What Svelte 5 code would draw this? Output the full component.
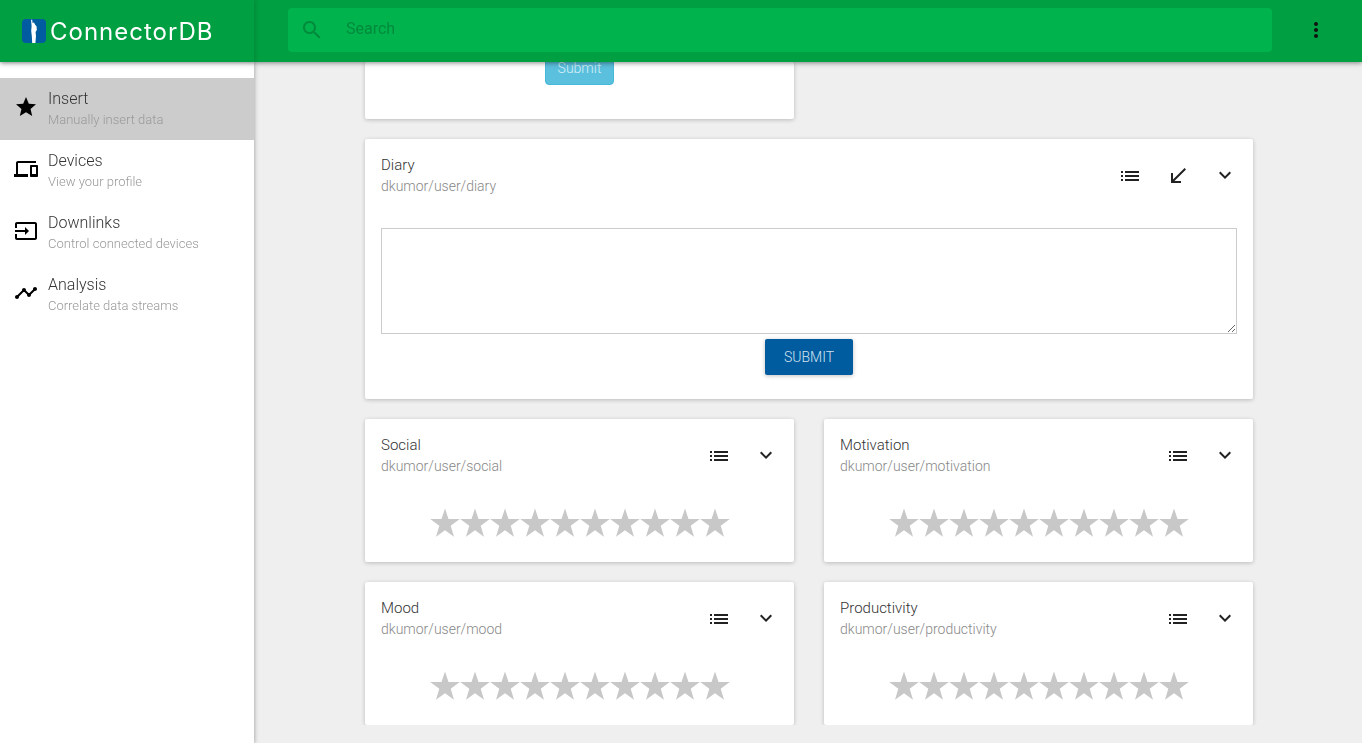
<script>
    const nav = [
        { title: "Insert", sub: "Manually insert data", icon: "star", active: true },
        { title: "Devices", sub: "View your profile", icon: "devices" },
        { title: "Downlinks", sub: "Control connected devices", icon: "input" },
        { title: "Analysis", sub: "Correlate data streams", icon: "timeline" },
    ];

    const ratings = [
        { title: "Social", path: "dkumor/user/social" },
        { title: "Motivation", path: "dkumor/user/motivation" },
        { title: "Mood", path: "dkumor/user/mood" },
        { title: "Productivity", path: "dkumor/user/productivity" },
    ];

    const icons = {
        star: "M12 17.27L18.18 21l-1.64-7.03L22 9.24l-7.19-.61L12 2 9.19 8.63 2 9.24l5.46 4.73L5.82 21z",
        devices: "M4 6h18V4H4c-1.1 0-2 .9-2 2v11H0v3h14v-3H4V6zm19 2h-6c-.55 0-1 .45-1 1v10c0 .55.45 1 1 1h6c.55 0 1-.45 1-1V9c0-.55-.45-1-1-1zm-1 9h-4v-7h4v7z",
        input: "M21 3.01H3c-1.1 0-2 .9-2 2V9h2V4.99h18v14.03H3V15H1v4.01c0 1.1.9 1.98 2 1.98h18c1.1 0 2-.88 2-1.98v-14c0-1.11-.9-2-2-2zM11 16l4-4-4-4v3H1v2h10v3z",
        timeline: "M23 8c0 1.1-.9 2-2 2-.18 0-.35-.02-.51-.07l-3.56 3.55c.05.16.07.34.07.52 0 1.1-.9 2-2 2s-2-.9-2-2c0-.18.02-.36.07-.52l-2.55-2.55c-.16.05-.34.07-.52.07s-.36-.02-.52-.07l-4.55 4.56c.05.16.07.33.07.51 0 1.1-.9 2-2 2s-2-.9-2-2 .9-2 2-2c.18 0 .35.02.51.07l4.56-4.55C8.02 9.36 8 9.18 8 9c0-1.1.9-2 2-2s2 .9 2 2c0 .18-.02.36-.07.52l2.55 2.55c.16-.05.34-.07.52-.07s.36.02.52.07l3.55-3.56C19.02 8.35 19 8.18 19 8c0-1.1.9-2 2-2s2 .9 2 2z",
        list: "M3 13h2v-2H3v2zm0 4h2v-2H3v2zm0-8h2V7H3v2zm4 4h14v-2H7v2zm0 4h14v-2H7v2zM7 7v2h14V7H7z",
        received: "M20 5.41L18.59 4 7 15.59V9H5v10h10v-2H8.41z",
        down: "M7.41 8.59L12 13.17l4.59-4.58L18 10l-6 6-6-6 1.41-1.41z",
        search: "M15.5 14h-.79l-.28-.27C15.41 12.59 16 11.11 16 9.5 16 5.91 13.09 3 9.5 3S3 5.91 3 9.5 5.91 16 9.5 16c1.61 0 3.09-.59 4.23-1.57l.27.28v.79l5 4.99L20.49 19l-4.99-5zm-6 0C7.01 14 5 11.99 5 9.5S7.01 5 9.5 5 14 7.01 14 9.5 11.99 14 9.5 14z",
        more: "M12 8c1.1 0 2-.9 2-2s-.9-2-2-2-2 .9-2 2 .9 2 2 2zm0 2c-1.1 0-2 .9-2 2s.9 2 2 2 2-.9 2-2-.9-2-2-2zm0 6c-1.1 0-2 .9-2 2s.9 2 2 2 2-.9 2-2-.9-2-2-2z",
    };
</script>

{#snippet icon(name)}
    <svg class="icon" viewBox="0 0 24 24" aria-hidden="true"><path d={icons[name]} /></svg>
{/snippet}

{#snippet cardHead(title, path, actions)}
    <div class="card-head">
        <div class="card-title">
            <div class="name">{title}</div>
            <div class="path">{path}</div>
        </div>
        <div class="actions">
            {#each actions as a}
                <button class="action">{@render icon(a)}</button>
            {/each}
        </div>
    </div>
{/snippet}

<header class="topbar">
    <div class="brand">
        <svg class="logo" viewBox="0 0 24 24" aria-hidden="true">
            <rect width="24" height="24" rx="4" fill="#005ca0" />
            <path
                d="M9 .8h1.2l.4 3.2 1.4-.5 1 2 1.6 2 .2 3.5-1.2 2 .4 4-.6 7h-3.2l-.4-7-.6-5 .4-5z"
                fill="#fff"
            />
        </svg>
        <span class="brand-name">ConnectorDB</span>
    </div>
    <div class="searchbar">
        <div class="search">
            <span class="search-icon">{@render icon("search")}</span>
            <span class="search-label">Search</span>
        </div>
        <button class="more">{@render icon("more")}</button>
    </div>
</header>

<aside class="sidebar">
    {#each nav as item}
        <div class="nav-item" class:active={item.active}>
            <span class="nav-icon">{@render icon(item.icon)}</span>
            <div>
                <div class="nav-title">{item.title}</div>
                <div class="nav-sub">{item.sub}</div>
            </div>
        </div>
    {/each}
</aside>

<main class="content">
    <section class="card clipped">
        <button class="submit-old">Submit</button>
    </section>

    <section class="card diary">
        {@render cardHead("Diary", "dkumor/user/diary", ["list", "received", "down"])}
        <div class="diary-body">
            <textarea></textarea>
            <button class="submit">Submit</button>
        </div>
    </section>

    <div class="rating-grid">
        {#each ratings as r}
            <section class="card rating">
                {@render cardHead(r.title, r.path, ["list", "down"])}
                <div class="stars">
                    {#each Array(10) as _}
                        <svg class="star" viewBox="0 0 30 30" aria-hidden="true">
                            <polygon points="15,0.5 18.5,11 29.8,11 20.7,17.8 24,28.8 15,22.2 6,28.8 9.3,17.8 0.2,11 11.5,11" />
                        </svg>
                    {/each}
                </div>
            </section>
        {/each}
    </div>
</main>

<style>
    :global(body) {
        background: #efefef;
        font-family: Roboto, "Liberation Sans", sans-serif;
        font-weight: 300;
        color: #333;
        overflow: hidden;
    }

    button {
        font-family: inherit;
        border: none;
        background: none;
        padding: 0;
    }

    .icon {
        display: block;
        width: 24px;
        height: 24px;
        fill: currentColor;
    }

    .topbar {
        position: fixed;
        top: 0;
        left: 0;
        right: 0;
        z-index: 3;
        height: 62px;
        display: flex;
        background: #009f41;
        box-shadow: 0 1px 6px rgba(0, 0, 0, 0.25), 0 1px 4px rgba(0, 0, 0, 0.25);
    }

    .brand {
        width: 254px;
        flex: none;
        display: flex;
        align-items: center;
        gap: 4px;
        padding-left: 22px;
        box-sizing: border-box;
        box-shadow: 2px 0 4px rgba(0, 0, 0, 0.12);
    }

    .logo {
        width: 24px;
        height: 24px;
    }

    .brand-name {
        font-family: Inter, sans-serif;
        font-size: 24px;
        font-weight: 400;
        letter-spacing: 1px;
        color: #fff;
    }

    .searchbar {
        flex: 1;
        display: flex;
        align-items: center;
        padding-left: 34px;
        padding-bottom: 2px;
    }

    .search {
        width: 984px;
        height: 44px;
        display: flex;
        align-items: center;
        background: #00b34d;
        border-radius: 4px;
        color: #008a3c;
    }

    .search-icon {
        margin-left: 12px;
    }

    .search-label {
        margin-left: 22px;
        padding-bottom: 4px;
        font-size: 16px;
        font-weight: 400;
    }

    .more {
        margin-left: 32px;
        color: #111;
    }

    .sidebar {
        position: fixed;
        top: 62px;
        left: 0;
        bottom: 0;
        z-index: 2;
        width: 254px;
        padding-top: 16px;
        box-sizing: border-box;
        background: #fff;
        box-shadow: 0 1px 6px rgba(0, 0, 0, 0.2), 0 1px 4px rgba(0, 0, 0, 0.2);
    }

    .nav-item {
        height: 62px;
        display: flex;
        align-items: center;
        gap: 10px;
        padding-left: 14px;
        padding-top: 2px;
        box-sizing: border-box;
    }

    .nav-item .nav-icon {
        margin-top: -6px;
    }

    .nav-item.active {
        background: #cccccc;
    }

    .nav-icon {
        color: #000;
    }

    .nav-title {
        font-size: 16px;
        line-height: 20px;
        color: #333;
    }

    .nav-sub {
        font-size: 13px;
        line-height: 22px;
        color: #999;
    }

    .content {
        box-sizing: border-box;
        width: 888px;
        margin-left: 365px;
        padding-top: 62px;
        display: flex;
        flex-direction: column;
        gap: 20px;
    }

    .card {
        background: #fff;
        border-radius: 2px;
        box-shadow: 0 1px 4px rgba(0, 0, 0, 0.22);
    }

    .clipped {
        width: 429px;
        height: 57px;
        display: flex;
        justify-content: center;
    }

    .submit-old {
        width: 69px;
        height: 34px;
        margin-top: -11px;
        background: #5bc0de;
        border: 1px solid #46b8da;
        border-radius: 4px;
        color: #d8f0f7;
        font-size: 14px;
        font-weight: 300;
    }

    .card-head {
        display: flex;
        justify-content: space-between;
        padding: 16px 4px 0 16px;
    }

    .name {
        font-size: 15px;
        line-height: 20px;
        color: #333;
    }

    .path {
        font-size: 14px;
        line-height: 22px;
        color: #888;
    }

    .actions {
        display: flex;
    }

    .action {
        width: 47.5px;
        height: 40px;
        display: flex;
        align-items: center;
        justify-content: center;
        color: #222;
    }

    .action:not(:last-child) {
        padding-top: 2px;
    }

    .diary {
        height: 260px;
    }

    .diary-body {
        display: flex;
        flex-direction: column;
        align-items: center;
        padding: 0 16px;
        margin-top: 31px;
    }

    textarea {
        display: block;
        box-sizing: border-box;
        width: 100%;
        height: 106px;
        margin: 0;
        border: 1px solid #ccc;
        background: #fff;
    }

    .submit {
        width: 88px;
        height: 36px;
        margin-top: 5px;
        background: #005c9f;
        border-radius: 2px;
        color: #d5e3ef;
        font-size: 14px;
        font-weight: 300;
        text-transform: uppercase;
        box-shadow: 0 1px 4px rgba(0, 0, 0, 0.25);
    }

    .rating-grid {
        display: grid;
        grid-template-columns: 429px 429px;
        gap: 20px 30px;
    }

    .rating {
        height: 143px;
    }

    .stars {
        display: flex;
        justify-content: center;
        margin-top: 31px;
    }

    .star {
        display: block;
        width: 30px;
        height: 30px;
        fill: #c8c8c8;
    }
</style>
